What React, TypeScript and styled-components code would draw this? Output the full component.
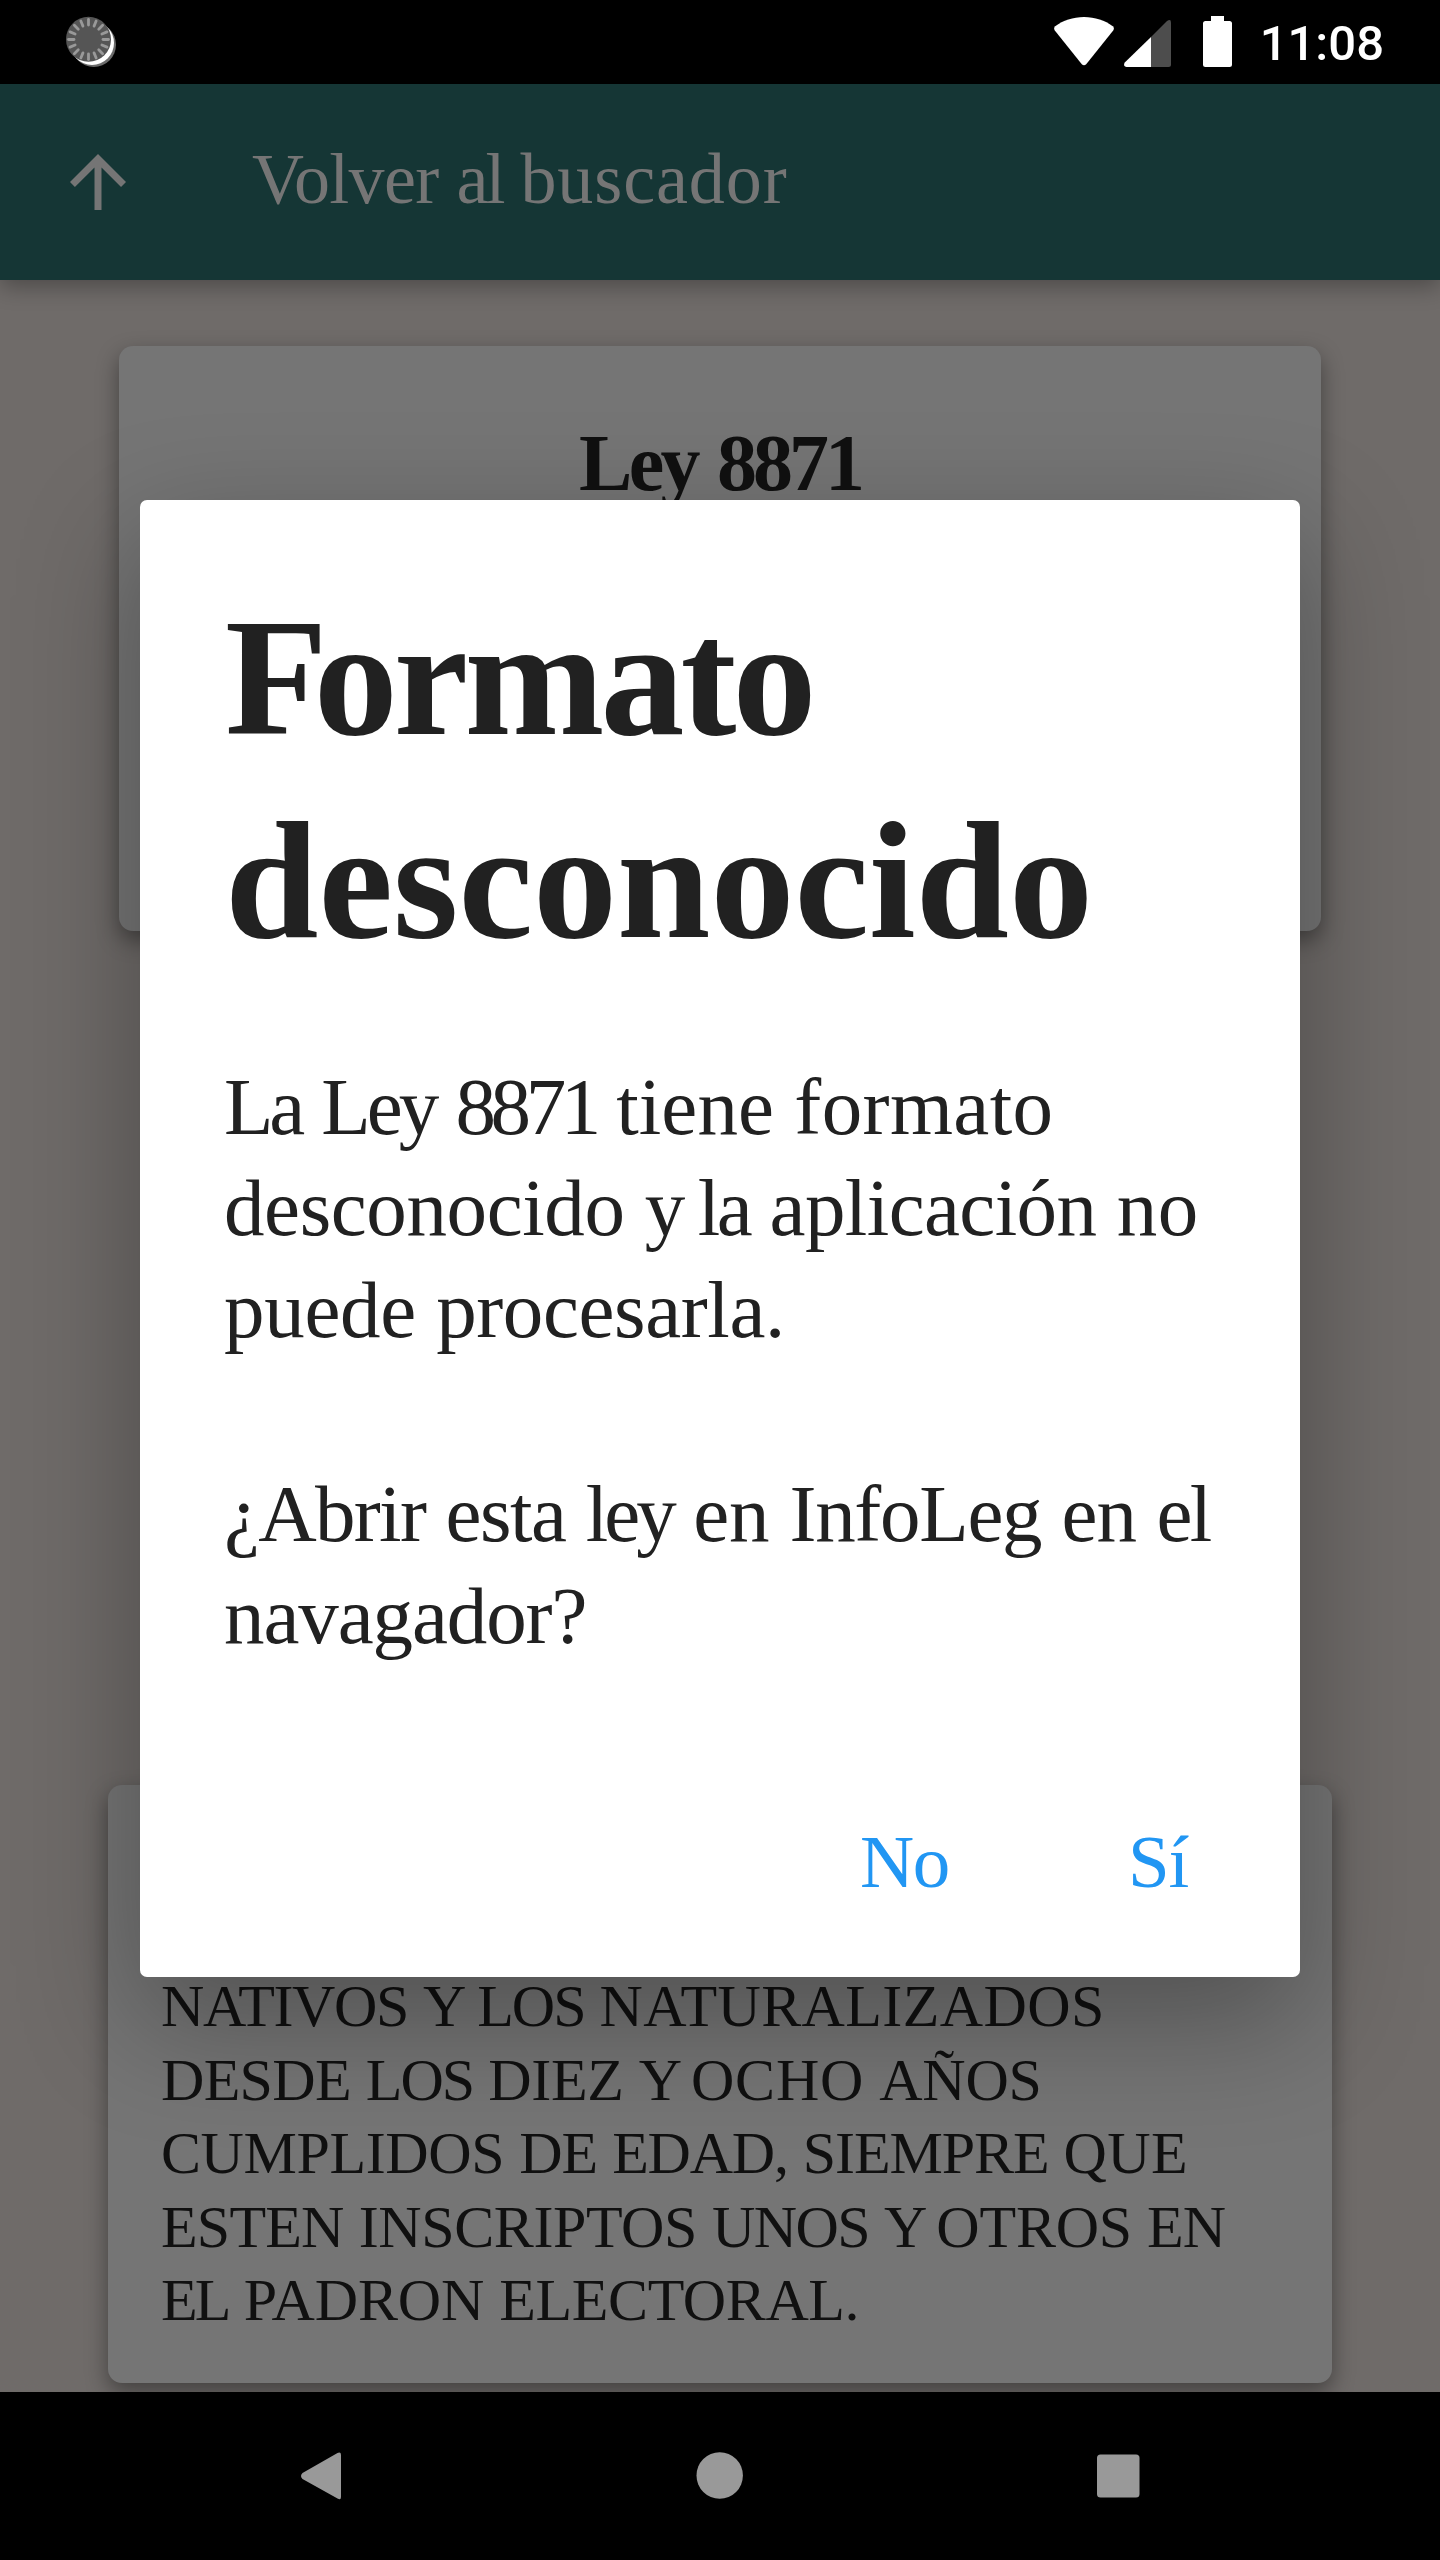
import React from "react";
import styled, { createGlobalStyle } from "styled-components";

const serif = `"Liberation Serif", "Times New Roman", serif`;

const GlobalStyle = createGlobalStyle`
  *, *::before, *::after { box-sizing: border-box; }
  body { margin: 0; background: #000; }
`;

const Screen = styled.div`
  position: relative;
  width: 1440px;
  height: 2560px;
  display: flex;
  flex-direction: column;
  overflow: hidden;
  background: #6f6b69;
  font-family: ${serif};
`;

const StatusBar = styled.header`
  flex: none;
  height: 84px;
  display: flex;
  align-items: flex-start;
  justify-content: space-between;
  padding: 0 56px 0 64px;
  background: #000;
  z-index: 2;
`;

const StatusGroup = styled.div`
  display: flex;
  height: 84px;
`;

const Clock = styled.span`
  font: 500 49px/84px Roboto, sans-serif;
  padding-top: 2px;
  color: #fff;
`;

const AppBar = styled.nav`
  flex: none;
  height: 196px;
  display: flex;
  align-items: center;
  gap: 112px;
  padding-left: 56px;
  background: #153635;
  box-shadow: 0 6px 22px rgba(0, 0, 0, 0.32);
  z-index: 1;
`;

const BarTitle = styled.h1`
  margin: 0;
  padding-bottom: 6px;
  font-size: 72px;
  line-height: 100px;
  font-weight: 400;
  color: #757575;
`;

const Content = styled.main`
  flex: 1;
  min-height: 0;
  display: flex;
  flex-direction: column;
  align-items: center;
  justify-content: space-between;
  padding: 66px 0 9px;
`;

const Card = styled.section<{ $width: number; $height: number }>`
  flex: none;
  width: ${(p) => p.$width}px;
  height: ${(p) => p.$height}px;
  display: flex;
  flex-direction: column;
  border-radius: 14px;
  background: #757575;
  color: #101010;
  box-shadow: 0 9px 22px rgba(0, 0, 0, 0.4);
`;

const LawCard = styled(Card)`
  align-items: center;
  padding-top: 67px;
`;

const SummaryCard = styled(Card)`
  justify-content: flex-end;
  padding: 0 53px 45px;
  font-size: 60px;
  line-height: 73.6px;
`;

const LawTitle = styled.h2`
  margin: 0;
  font-size: 80px;
  line-height: 100px;
  font-weight: 700;
`;

const Line = styled.span`
  display: block;
  white-space: nowrap;
`;

const Word = styled.span<{ $spacing: number }>`
  letter-spacing: ${(p) => p.$spacing}px;
`;

const NavBar = styled.footer`
  flex: none;
  height: 168px;
  display: flex;
  align-items: center;
  justify-content: space-between;
  padding: 0 293px;
  background: #000;
  z-index: 2;
`;

const Overlay = styled.div`
  position: absolute;
  inset: 84px 0 168px;
  display: flex;
  justify-content: center;
  align-items: center;
`;

const Dialog = styled.div`
  width: 1160px;
  height: 1477px;
  display: flex;
  flex-direction: column;
  padding: 76px 84px 65px;
  border-radius: 7px;
  background: #fff;
  color: #212121;
  box-shadow: 0 42px 120px 4px rgba(0, 0, 0, 0.3);
`;

const DialogTitle = styled.h2`
  margin: 0 0 75px;
  padding-left: 1px;
  font-size: 168px;
  line-height: 203px;
  font-weight: 700;
`;

const Message = styled.p`
  margin: 0;
  font-size: 81px;
  line-height: 101.9px;

  & + & {
    margin-top: 101.9px;
  }
`;

const Actions = styled.div`
  display: flex;
  justify-content: flex-end;
  gap: 179px;
  margin-top: auto;
  padding-right: 28px;
`;

const Action = styled.button`
  padding: 0;
  border: 0;
  background: none;
  font: 400 75px/100px ${serif};
  letter-spacing: -1.3px;
  color: #2196f3;
`;

type Tracked = [word: string, spacing: number];

const barTitle: Tracked[] = [["Volver", -0.7], ["al", -3], ["buscador", 0.9]];

const lawTitle: Tracked[] = [["Ley", -3.6], ["8871", -4]];

const summary: Tracked[][] = [
  [["NATIVOS", -1.4], ["Y", -4], ["LOS", -2], ["NATURALIZADOS", 0.4]],
  [["DESDE", -0.7], ["LOS", -2], ["DIEZ", -0.3], ["Y", -6], ["OCHO", 0.8], ["AÑOS", -0.2]],
  [["CUMPLIDOS", -0.4], ["DE", -1], ["EDAD,", -1.2], ["SIEMPRE", -1.1], ["QUE", 0.4]],
  [["ESTEN", -0.8], ["INSCRIPTOS", -0.4], ["UNOS", -1.6], ["Y", -6], ["OTROS", -0.2], ["EN", -1]],
  [["EL", -2.8], ["PADRON", -0.1], ["ELECTORAL.", -0.4]],
];

const explanation: Tracked[][] = [
  [["La", -4.2], ["Ley", -4], ["8871", -5.4], ["tiene", 0.1], ["formato", 0.4]],
  [["desconocido", -0.4], ["y", -7.8], ["la", -3.4], ["aplicación", -0.6], ["no", 0.5]],
  [["puede", -0.3], ["procesarla.", -0.4]],
];

const question: Tracked[][] = [
  [["¿Abrir", -1.7], ["esta", -1.5], ["ley", -3.9], ["en", -0.2], ["InfoLeg", -1.3], ["en", -0.9], ["el", -2.5]],
  [["navagador?", -1.1]],
];

const Words = ({ items }: { items: Tracked[] }) => (
  <>
    {items.map(([word, spacing], i) => (
      <React.Fragment key={i}>
        {i > 0 && " "}
        <Word $spacing={spacing}>{word}</Word>
      </React.Fragment>
    ))}
  </>
);

const Lines = ({ rows }: { rows: Tracked[][] }) => (
  <>
    {rows.map((row, i) => (
      <Line key={i}>
        <Words items={row} />
      </Line>
    ))}
  </>
);

const SyncIcon = () => (
  <svg width="56" height="84" viewBox="64 0 56 84">
    <circle cx="93.8" cy="44.8" r="22.2" fill="#6b6b6b" />
    <circle cx="92" cy="43" r="22" fill="#fff" />
    <circle cx="88.5" cy="39.3" r="22.5" fill="#555" />
    {Array.from({ length: 16 }, (_, i) => (
      <path
        key={i}
        d="M88.5 19.5v5.5"
        stroke="#999"
        strokeWidth="2.8"
        strokeLinecap="round"
        transform={`rotate(${i * 22.5} 88.5 39.5)`}
      />
    ))}
  </svg>
);

const SystemIcons = () => (
  <svg width="210" height="84" viewBox="1050 0 210 84">
    <path
      fill="#fff"
      d="M1084 17C1073 17 1063 20.500 1055.200 26.200Q1053.200 28 1054.800 30.400L1081.800 64.200Q1084 66.500 1086.200 64.200L1113.200 30.400Q1114.800 28 1112.800 26.200C1105 20.500 1095 17 1084 17Z"
    />
    <path fill="#4d4d4d" d="M1151 37L1167 21Q1171 18.500 1171 22.500V64.500Q1171 67 1168.500 67H1151Z" />
    <path fill="#fff" d="M1151 37V67H1126.500Q1123 66.500 1124.500 62.800Z" />
    <path
      fill="#fff"
      d="M1211 16h13v5h5.500q2.500 0 2.500 2.500v41q0 2.500-2.500 2.500h-24q-2.500 0-2.500-2.500v-41q0-2.500 2.500-2.500h5.500z"
    />
  </svg>
);

export default function App() {
  return (
    <>
      <GlobalStyle />
      <Screen>
        <StatusBar>
          <SyncIcon />
          <StatusGroup>
            <SystemIcons />
            <Clock>11:08</Clock>
          </StatusGroup>
        </StatusBar>
        <AppBar>
          <svg width="84" height="84" viewBox="0 0 24 24">
            <path fill="#757575" d="M4 12l1.410 1.410L11 7.830V20h2V7.830l5.580 5.590L20 12l-8-8-8 8z" />
          </svg>
          <BarTitle>
            <Words items={barTitle} />
          </BarTitle>
        </AppBar>
        <Content>
          <LawCard $width={1202} $height={585}>
            <LawTitle>
              <Words items={lawTitle} />
            </LawTitle>
          </LawCard>
          <SummaryCard $width={1224} $height={598}>
            <Lines rows={summary} />
          </SummaryCard>
        </Content>
        <NavBar>
          <svg width="56" height="56" viewBox="0 0 56 56">
            <path fill="#999" d="M44.500 5Q48 3.500 48 7V49Q48 52.500 44.500 50.500L9.500 31Q6.500 28 9.500 25Z" />
          </svg>
          <svg width="56" height="56" viewBox="0 0 56 56">
            <circle cx="27.700" cy="27.500" r="23.200" fill="#999" />
          </svg>
          <svg width="56" height="56" viewBox="0 0 56 56">
            <rect x="6" y="6.500" width="42.500" height="43" rx="3.500" fill="#999" />
          </svg>
        </NavBar>
        <Overlay>
          <Dialog role="dialog">
            <DialogTitle>
              <Line>
                <Word $spacing={-14}>F</Word>
                <Word $spacing={-3.9}>ormato</Word>
              </Line>
              <Line>desconocido</Line>
            </DialogTitle>
            <Message>
              <Lines rows={explanation} />
            </Message>
            <Message>
              <Lines rows={question} />
            </Message>
            <Actions>
              <Action>No</Action>
              <Action>Sí</Action>
            </Actions>
          </Dialog>
        </Overlay>
      </Screen>
    </>
  );
}
